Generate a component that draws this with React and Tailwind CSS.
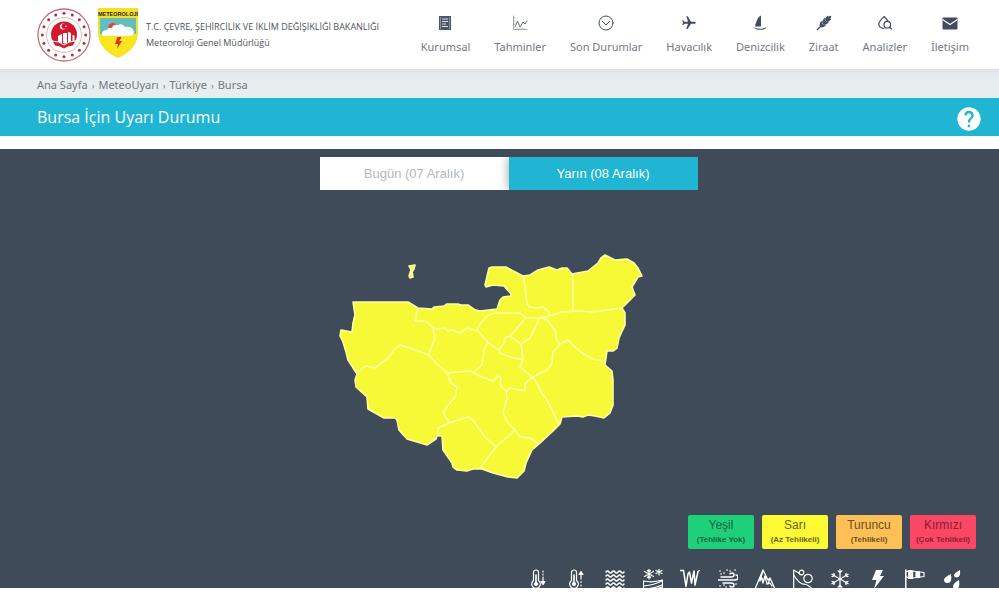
import { MdHelp, MdFlight } from "react-icons/md";
import { BsSnow } from "react-icons/bs";

const LINE = { fill: "none", stroke: "currentColor", strokeLinecap: "round", strokeLinejoin: "round" };

const navigation = [
  {
    label: "Kurumsal",
    icon: (
      <>
        <path d="M2 1h12v14H2z" fill="#4b5468" />
        <path d="M5 4h6M5 6.500h6M5 9h4M5 11.500h6" stroke="#dfe2e7" strokeWidth="1" />
        <path d="M3.500 2v12M12.500 2v12" stroke="#9aa0ad" strokeWidth=".8" />
      </>
    ),
  },
  {
    label: "Tahminler",
    icon: (
      <g {...LINE} stroke="#a0a5ae" strokeWidth="1">
        <path d="M1.500 1v13.500H15" />
        <path d="M3 12l2.500-6 2.500 6 3-5 2 2 2-3" stroke="#686e7b" />
        <path d="M2 3h1M2 6h1M2 9h1M5 13v1M8 13v1M11 13v1" />
      </g>
    ),
  },
  {
    label: "Son Durumlar",
    icon: (
      <g {...LINE} strokeWidth="1">
        <circle cx="8" cy="8" r="7" />
        <path d="M4.300 6.300L8 10l3.700-3.700" />
      </g>
    ),
  },
  { label: "Havacılık", plane: true },
  {
    label: "Denizcilik",
    icon: (
      <>
        <path d="M9 .5v11H3C4 7 5.500 2 9 .5z" fill="currentColor" />
        <path d="M1 12c3 2 9 2.500 13.500.3-1 2-3 2.500-6 2.500-3 0-6-.8-7.500-2.800z" fill="currentColor" />
      </>
    ),
  },
  {
    label: "Ziraat",
    icon: (
      <>
        <path d="M1 15L14 2" stroke="currentColor" strokeWidth="1.200" />
        <g fill="currentColor">
          <ellipse cx="5" cy="8.500" rx="1.100" ry="2.700" transform="rotate(25 5 8.500)" />
          <ellipse cx="8" cy="5.500" rx="1.100" ry="2.700" transform="rotate(25 8 5.500)" />
          <ellipse cx="11" cy="3" rx="1.100" ry="2.500" transform="rotate(30 11 3)" />
          <ellipse cx="7.300" cy="10.800" rx="2.700" ry="1.100" transform="rotate(-25 7.300 10.800)" />
          <ellipse cx="10.300" cy="7.900" rx="2.700" ry="1.100" transform="rotate(-25 10.300 7.900)" />
          <ellipse cx="12.800" cy="5" rx="2.500" ry="1.100" transform="rotate(-30 12.800 5)" />
          <ellipse cx="13.500" cy="2.500" rx="2.200" ry="1.100" transform="rotate(-45 13.500 2.500)" />
        </g>
      </>
    ),
  },
  {
    label: "Analizler",
    icon: (
      <g {...LINE} strokeWidth="1.200">
        <path d="M7 13.500C3.500 13.500 1.800 11.500 1.800 9 1.800 6 5 4 7 1.500 8.500 3.300 10 4.500 11 6" />
        <circle cx="10.300" cy="9.700" r="3.300" />
        <path d="M12.700 12.200l2 2" />
      </g>
    ),
  },
  {
    label: "İletişim",
    icon: (
      <>
        <rect x="0.500" y="2.500" width="15" height="12" rx="1" fill="currentColor" />
        <path d="M0.500 4.500L8 9.500l7.500-5" fill="none" stroke="#fff" strokeWidth="1.100" />
      </>
    ),
  },
];

const levels = [
  { name: "Yeşil", note: "(Tehlike Yok)", tone: "bg-[#1fd07b] text-[#14653f]" },
  { name: "Sarı", note: "(Az Tehlikeli)", tone: "bg-[#fdfa33] text-[#66622a]" },
  { name: "Turuncu", note: "(Tehlikeli)", tone: "bg-[#fdc057] text-[#6b5026]" },
  { name: "Kırmızı", note: "(Çok Tehlikeli)", tone: "bg-[#fb4763] text-[#8a1f35]" },
];

const thermometer = (
  <>
    <path d="M3.500 11.500V3.500a2.500 2.500 0 0 1 5 0v8a4.300 4.300 0 1 1-5 0z" />
    <path d="M6 6v8" strokeWidth="1.600" />
    <circle cx="6" cy="15" r="1.500" fill="currentColor" />
  </>
);

const hazards = [
  {
    name: "Soğuk",
    drawing: (
      <>
        {thermometer}
        <path d="M13 2v1M13 5v1M13 8v7" />
        <path d="M11 12.500h4l-2 3z" fill="currentColor" />
      </>
    ),
  },
  {
    name: "Sıcak",
    drawing: (
      <>
        {thermometer}
        <path d="M13 5v5M13 12.500v1M13 16v1" />
        <path d="M11 5.500h4l-2-3z" fill="currentColor" />
      </>
    ),
  },
  {
    name: "Sel",
    drawing: (
      <path
        d="M1 3q1.500-2 3 0t3 0 3 0 3 0 3 0 3 0M1 7q1.500-2 3 0t3 0 3 0 3 0 3 0 3 0M1 11q1.500-2 3 0t3 0 3 0 3 0 3 0 3 0M1 15q1.500-2 3 0t3 0 3 0 3 0 3 0 3 0M1 19q1.500-2 3 0t3 0 3 0 3 0 3 0 3 0"
        strokeWidth="1.500"
      />
    ),
  },
  {
    name: "Zirai don",
    drawing: (
      <>
        <path d="M6 0v10M1.500 2.500l9 5M10.500 2.500l-9 5M4.500 1.500L6 3l1.500-1.500M4.500 8.500L6 7l1.500 1.500M16 0v6M13 1.500l6 3M19 1.500l-6 3" />
        <path d="M.5 20v-8q9 2 19-1v9M1 17q10-1 18-5M3 20q9-1 16-4M12 20l7-2" />
      </>
    ),
  },
  {
    name: "Buzlanma",
    drawing: <path d="M.5 1.500h3L6 17.500 8 5l1.500-2 2 11L14 2l1 14L18 2.500l1.500-1" strokeWidth="1.500" />,
  },
  {
    name: "Toz taşınımı",
    drawing: (
      <>
        <path d="M3 8h10q3 0 3-2t-2-2-2 1M0 11h17q3 0 3-2.500T18 6M5 14h8q3 0 3 2t-2 2-2-1" strokeWidth="1.500" />
        <path d="M2 2h.1M6 4h.1M9 1h.1M12 2h.1M17 1h.1M3 5h.1M2 17h.1M6 16h.1M8 18h.1M18 15h.1" strokeWidth="1.600" />
      </>
    ),
  },
  {
    name: "Çığ",
    drawing: (
      <path d="M0 20L8 1l5 10 2-2 5 11M8 1L5 12l2-3 1 5 2-7 2 8M15 9l-2 6 2-1 2 3" strokeWidth="1.300" />
    ),
  },
  {
    name: "Fırtına",
    drawing: (
      <>
        <path d="M.7 20V1l5 3" />
        <circle cx="8.500" cy="3.500" r="2.300" />
        <path d="M.7 6q5 8 9 9" />
        <circle cx="15" cy="9.500" r="4.200" />
        <path d="M10 15q5 0 9 5" />
      </>
    ),
  },
  { name: "Kar", snow: true },
  { name: "Gök gürültülü sağanak", drawing: <path d="M8 1h7l-3 6h4L6 20l2.500-9H4z" fill="currentColor" stroke="none" /> },
  {
    name: "Rüzgar",
    drawing: (
      <>
        <path d="M.8 20V1" strokeWidth="1.500" />
        <path d="M1 3l3-1.500 15 2v4l-15 2L1 7.500M4 1.500v8M7.500 2v7.500M14.500 3v5.500" />
        <path d="M4 1.500l3.500.5v7L4 9.500zM11 2.500l3.500.5v5.200l-3.500.4z" fill="currentColor" />
      </>
    ),
  },
  {
    name: "Yağış",
    drawing: (
      <g fill="currentColor" stroke="none">
        <path d="M17 1q1 7-3 7.500-3 0-3-2.500Q11.500 4 17 1z" />
        <path d="M8 5q1.500 9-3.500 9-3.500 0-3.500-3.500Q1.500 8 8 5z" />
        <path d="M16 11q1.500 9-3 9-3 0-3-3 .5-3 6-6z" />
      </g>
    ),
  },
];

const outline =
  "M353 302H408L418 308L432 309L434 307L444 306L447 304H458L461 305H468L475 310L480 311L497 309L500 300L503 297L511 296V294L504 286L493 285L486 287L485 285L489 268L492 267H506L523 276L530 275L538 270L549 267L557 270L562 268H567L572 274L588 271L598 263L601 258L605 255L615 260L627 259L634 263L638 268L642 276L638 277L632 287L635 295L628 302L622 308L625 313V325L619 338L617 348L613 351H607L605 365L612 371L613 380V405L610 413L604 418L595 416L588 415L583 417L577 416L562 417L560 424L552 432L539 444L532 450L526 463L524 471L517 478L508 477L493 473L482 469H473L467 471L457 470L453 467L452 463L443 450L442 436H437L436 439L427 445L407 439L399 430L397 420L395 418H384L368 409L367 397L356 387L355 380L357 374L348 360L346 352L343 342L340 336L341 330L352 332L353 323L355 315Z";

const borders = [
  "M418 308L415 321L425 321L430 325L433 328L435 338L429 353",
  "M433 328L438 329L445 328L448 331L452 330L460 333L463 331L468 328L473 330L477 330",
  "M475 310L480 311M477 330L480 324L488 315L495 313H520L526 318H540L549 316L562 312L580 311L592 312L622 308",
  "M523 276L525 286L527 304L530 307L537 308L543 307L549 312V316",
  "M572 274L573 280V311",
  "M477 330L488 342L484 350L482 365L473 373",
  "M357 374L362 368L367 366L375 368L388 358L394 350L400 345L407 347L429 355L436 363L447 373L470 371L482 377L493 381L498 376L501 378L500 385L506 391L510 388L525 391V384L532 377",
  "M429 353V355M447 373L451 383L457 387L456 395L443 412L449 423L438 428V436",
  "M449 423L468 417L473 420L485 437L496 447L480 468M496 447L515 430L520 437L530 438L539 444",
  "M506 391L507 398L503 413L508 423L515 430",
  "M532 377L535 380L542 393L550 405L557 421L560 424",
  "M532 377L520 367L523 360L510 357L500 353L499 349L503 345L505 338L510 336L521 344L523 360M510 336L526 318M521 344L530 338L533 332L540 317",
  "M488 342L498 350M540 317L547 320L555 330L557 341L560 344L553 352L552 363L547 370L532 377M560 344L568 340L573 345L582 353L595 360L605 360",
];

function MinistryEmblem() {
  const dots = Array.from({ length: 16 }, (_, i) => (i * Math.PI) / 8);
  return (
    <svg viewBox="0 0 54 54" className="size-[54px] shrink-0" role="img" aria-label="Bakanlık amblemi">
      <circle cx="27" cy="27" r="26" fill="#fff" stroke="#c86b76" strokeWidth="1.300" />
      <circle cx="27" cy="27" r="17.500" fill="none" stroke="#e3b4ba" strokeWidth="1" />
      {dots.map((a) => (
        <circle key={a} cx={27 + 21.700 * Math.sin(a)} cy={27 - 21.700 * Math.cos(a)} r="1.500" fill="#a43543" />
      ))}
      <circle cx="27" cy="26.500" r="13" fill="#d4192d" />
      <circle cx="26" cy="18.500" r="3" fill="#fff" />
      <circle cx="27.200" cy="18.200" r="2.600" fill="#d4192d" />
      <circle cx="29" cy="18.300" r=".8" fill="#fff" />
      <path d="M21 28l4-2v9l-4-1zM26 25h4v11l-4-1zM31 24l3 1v10l-3 1zM35.500 27l2 .5V34l-2 1z" fill="#fff" />
      <path d="M15 33q7 0 12 4 5-4 12-4l-3 5q-5 0-9 3-4-3-9-3z" fill="#d4192d" stroke="#fff" strokeWidth="1" />
    </svg>
  );
}

function MeteorologyShield() {
  return (
    <svg viewBox="0 0 42 52" className="h-[52px] w-[42px] shrink-0" role="img" aria-label="Meteoroloji">
      <path d="M1 1h40v24q0 17-20 26Q1 42 1 25z" fill="#f5df2b" />
      <path d="M3 11h36v16H3z" fill="#64bdc0" />
      <path d="M2 27h38q-1 14-19 22Q3 41 2 27z" fill="#fbe51d" />
      <circle cx="16" cy="21" r="5" fill="#dd4939" />
      <path d="M5 27q0-4 5-4 1-3 5-2 1-4 6-3 5-2 7 2 8-1 9 5 0 4-5 4H11q-6 1-6-2z" fill="#fff" />
      <path d="M20.500 30h4l-2 4h2.500l-5 8 1-5h-3z" fill="#d63a27" />
      <text x="21" y="8.500" textAnchor="middle" fontFamily="Liberation Sans, sans-serif" fontSize="5.500" fontWeight="700" fill="#2b2916">
        METEOROLOJİ
      </text>
    </svg>
  );
}

function Header() {
  return (
    <header className="flex h-[69px] items-center justify-between bg-white pr-[30px] pl-[37px]">
      <a href="#" className="flex items-center text-[9px] leading-4 text-[#4e5460]">
        <MinistryEmblem />
        <span className="ml-[6px] mb-1 flex">
          <MeteorologyShield />
        </span>
        <span className="ml-[7px] whitespace-nowrap">
          T.C. ÇEVRE, ŞEHİRCİLİK VE İKLİM DEĞİŞİKLİĞİ BAKANLIĞI
          <br />
          Meteoroloji Genel Müdürlüğü
        </span>
      </a>
      <nav className="flex gap-6 pt-px font-['Noto_Sans',sans-serif] text-[11px] leading-4 text-[#747984]">
        {navigation.map((item) => (
          <a key={item.label} href="#" className="flex flex-col items-center gap-2 whitespace-nowrap">
            {item.plane ? (
              <MdFlight className="size-4 rotate-90 text-[#434b60]" />
            ) : (
              <svg viewBox="0 0 16 16" className="size-4 text-[#434b60]" aria-hidden="true">
                {item.icon}
              </svg>
            )}
            {item.label}
          </a>
        ))}
      </nav>
    </header>
  );
}

function DistrictMap() {
  return (
    <svg viewBox="335 250 329 234" className="mx-auto mt-[60px] block w-[329px]" role="img" aria-label="Bursa ilçeleri uyarı haritası">
      <g stroke="#fdfda6" strokeWidth="1.600" strokeLinejoin="round">
        <path d={outline} fill="#f8f936" />
        <path d={borders.join("")} fill="none" />
        <path d="M409 266L415 265L414 269L412 272L413 277L410 278L409 276L411 270Z" fill="#f8f936" />
      </g>
    </svg>
  );
}

export default function App() {
  return (
    <div className="bg-white font-['Open_Sans','Noto_Sans',sans-serif]">
      <Header />
      <nav aria-label="Konum" className="flex h-[29px] items-center gap-1 bg-linear-to-b from-[#dfe4e8] to-[#e8eef0] to-40% pt-1 pl-[37px] font-['Noto_Sans',sans-serif] text-[11px] text-[#70777d]">
        <a href="#">Ana Sayfa</a>
        <span className="text-[9px]">›</span>
        <a href="#">MeteoUyarı</a>
        <span className="text-[9px]">›</span>
        <a href="#">Türkiye</a>
        <span className="text-[9px]">›</span>
        <span>Bursa</span>
      </nav>
      <div className="flex h-[38px] items-center justify-between bg-[#20b5d3] pr-4 pl-[37px] text-white">
        <h1 className="text-base">Bursa İçin Uyarı Durumu</h1>
        <button type="button" aria-label="Yardım" className="pt-1">
          <MdHelp className="size-7" />
        </button>
      </div>
      <main className="mt-[13px] overflow-hidden bg-[#3f4b58] pt-2">
        <div className="pl-[18px]">
          <div className="mx-auto flex w-[378px] overflow-hidden font-['Liberation_Sans',sans-serif] text-[13px]">
            <button type="button" className="h-[33px] flex-1 bg-white text-[#b3b8bc]">
              Bugün (07 Aralık)
            </button>
            <button type="button" className="h-[33px] flex-1 bg-[#20b5d3] text-white shadow-[0_0_10px_rgba(0,0,0,0.4)]">
              Yarın (08 Aralık)
            </button>
          </div>
        </div>
        <DistrictMap />
        <ul className="mt-[31px] flex justify-end gap-2 pr-[23px] text-center font-['Liberation_Sans',sans-serif]">
          {levels.map((level) => (
            <li key={level.name} className={`h-[34px] w-[66px] rounded-xs pt-[3px] whitespace-nowrap ${level.tone}`}>
              <div className="text-xs leading-[14px]">{level.name}</div>
              <div className="text-[8px] leading-4 font-bold">{level.note}</div>
            </li>
          ))}
        </ul>
        <ul className="mt-5 mr-[36px] ml-auto flex h-[19px] w-[433px] justify-between overflow-hidden text-white">
          {hazards.map((hazard) => (
            <li key={hazard.name} title={hazard.name}>
              {hazard.snow ? (
                <BsSnow className="size-5" />
              ) : (
                <svg viewBox="0 0 20 20" className="size-5" aria-hidden="true">
                  <g {...LINE} strokeWidth="1.200">
                    {hazard.drawing}
                  </g>
                </svg>
              )}
            </li>
          ))}
        </ul>
      </main>
    </div>
  );
}
